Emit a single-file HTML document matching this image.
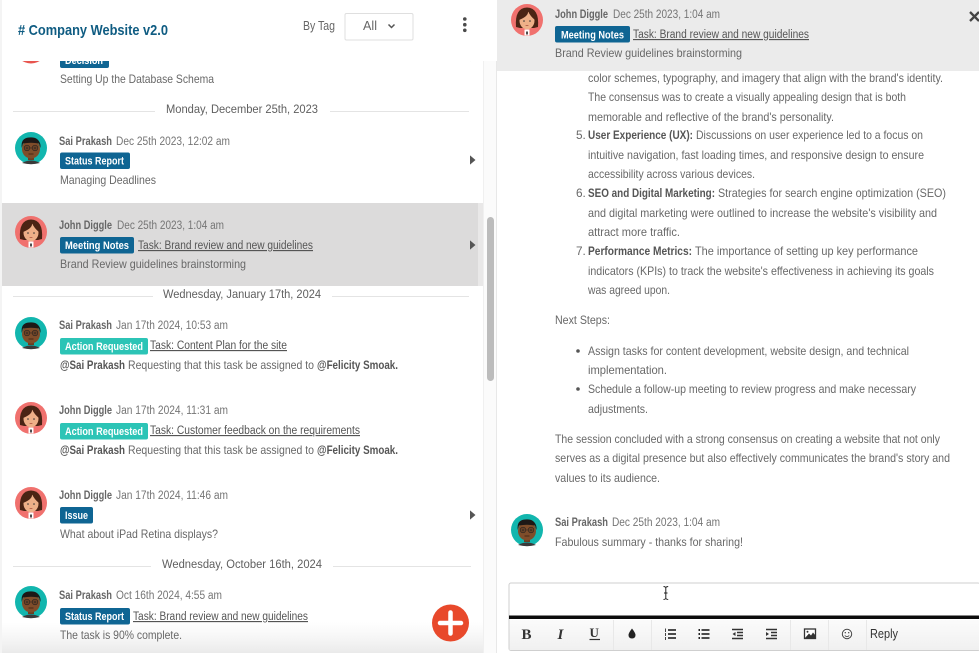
<!DOCTYPE html>
<html lang="en"><head><meta charset="utf-8"><title>Company Website v2.0</title>
<style>
html,body{margin:0;padding:0;background:#fff;width:979px;height:653px;overflow:hidden}
svg{display:block;filter:blur(.35px)}
text{font-family:"Liberation Sans",sans-serif;font-size:11.8px;fill:#686868}
.n{font-weight:bold;fill:#666;font-size:11.5px}
.d{fill:#757575;font-size:11.5px}
.t{font-weight:bold;fill:#fff;font-size:11px}
.l{fill:#555;font-size:11.5px;text-decoration:underline}
.b{font-weight:bold;fill:#555;font-size:11.5px}
.h{fill:#5f5f5f;font-size:12.200px}
</style></head><body>
<svg width="979" height="653" viewBox="0 0 979 653" xmlns="http://www.w3.org/2000/svg">
<defs>
<linearGradient id="fade" x1="0" y1="0" x2="0" y2="1"><stop offset="0" stop-color="#f0f0f0" stop-opacity="0"/><stop offset="1" stop-color="#eaeaea"/></linearGradient>
<linearGradient id="tb" x1="0" y1="0" x2="0" y2="1"><stop offset="0" stop-color="#fbfbfb"/><stop offset="1" stop-color="#f0f0f0"/></linearGradient>
<symbol id="man" viewBox="-16 -16 32 32" overflow="visible">
<circle r="16" fill="#12b6ae"/>
<path d="M-9 15Q0 10 9 15Q4 16.200 0 16.200Q-4 16.200 -9 15Z" fill="#3a3a3a"/>
<rect x="-3" y="6" width="6" height="6" fill="#6b3f22"/>
<ellipse cx="0" cy="1" rx="9" ry="9.500" fill="#7f4d2a"/>
<path d="M-9.300 0Q-10.500 -10 -2 -10.500Q7 -11.500 9.300 -4Q9.800 -2 9.300 0L8 -4.500Q0 -6 -8 -4.500Z" fill="#1d1816"/>
<circle cx="-4" cy="0" r="2.800" fill="#6a4226" stroke="#2a2320" stroke-width=".6"/>
<circle cx="4" cy="0" r="2.800" fill="#6a4226" stroke="#2a2320" stroke-width=".6"/>
<circle cx="-4" cy="0" r=".8" fill="#222"/><circle cx="4" cy="0" r=".8" fill="#222"/>
<path d="M-1.200 0H1.200" stroke="#2a2320" stroke-width=".6"/>
<path d="M-2.500 6H2.500" stroke="#3a2010" stroke-width=".8"/>
</symbol>
<symbol id="woman" viewBox="-16 -16 32 32" overflow="visible">
<circle r="16" fill="#f0716e"/>
<path d="M-11 7Q-12.500 -12 0 -12.500Q12.500 -12 11 7L7 8H-7Z" fill="#4a2414"/>
<ellipse cx="0" cy="0.500" rx="7.500" ry="8.800" fill="#eeb088"/>
<path d="M-8 0Q-7 -8 1 -9Q2 -4 -8 0ZM8 0Q7 -7 1 -9Q3 -4 8 0Z" fill="#4a2414"/>
<circle cx="-3" cy="1" r=".8" fill="#333"/><circle cx="3" cy="1" r=".8" fill="#333"/>
<path d="M-1.400 5.500H1.400" stroke="#a64a3a" stroke-width=".7"/>
<path d="M-2.500 9.500H2.500V15.500H-2.500Z" fill="#fff"/><rect x="-.8" y="11.500" width="1.600" height="3" fill="#222"/>
</symbol>
<symbol id="arr" viewBox="0 0 6 10"><path d="M0 0L6 5L0 10Z" fill="#555"/></symbol>
</defs>

<rect width="979" height="653" fill="#fff"/>
<rect x="0" y="0" width="2" height="653" fill="#f4f4f4"/>
<rect x="483" y="0" width="14" height="653" fill="#fbfbfb"/>
<rect x="483" y="61" width="1" height="592" fill="#f0f0f0"/>
<rect x="496" y="0" width="1" height="653" fill="#e8e8e8"/>
<rect x="487" y="217" width="7" height="164" rx="3.500" fill="#bcbcbc"/>

<!-- clipped top item -->
<circle cx="31" cy="47.500" r="16" fill="#e8554f"/>
<rect x="60" y="52" width="49" height="16" rx="2" fill="#0f6593"/>
<text class="t" x="65" y="64" textLength="38" lengthAdjust="spacingAndGlyphs">Decision</text>
<use href="#arr" x="470" y="52" width="5" height="10"/>
<text x="60" y="83" textLength="154" lengthAdjust="spacingAndGlyphs">Setting Up the Database Schema</text>

<!-- header -->
<rect x="0" y="0" width="497" height="61" fill="#fff"/>
<rect x="0" y="0" width="2" height="61" fill="#f4f4f4"/>
<text x="18" y="35" textLength="150" lengthAdjust="spacingAndGlyphs" style="font-size:14.800px;font-weight:bold;fill:#0f5c82"># Company Website v2.0</text>
<text x="303" y="30" textLength="32" lengthAdjust="spacingAndGlyphs" style="font-size:12.500px;fill:#666">By Tag</text>
<rect x="345" y="13.500" width="68" height="26.500" rx="1.500" fill="#fff" stroke="#dfdfdf"/>
<text x="363" y="30" textLength="14" lengthAdjust="spacingAndGlyphs" style="font-size:12.500px;fill:#666">All</text>
<path d="M388.500 24.500L391.500 27.500L394.500 24.500" fill="none" stroke="#555" stroke-width="1.500"/>
<circle cx="464.800" cy="19" r="1.800" fill="#4a4a4a"/><circle cx="464.800" cy="24.700" r="1.800" fill="#4a4a4a"/><circle cx="464.800" cy="30.300" r="1.800" fill="#4a4a4a"/>

<!-- date 1 -->
<path d="M13 111.500H155M330 111.500H469" stroke="#e4e4e4"/>
<text x="166" y="113" textLength="152" lengthAdjust="spacingAndGlyphs" class="h">Monday, December 25th, 2023</text>

<!-- item 1 -->
<use href="#man" x="15" y="132" width="32" height="32"/>
<text class="n" x="59" y="145" textLength="53" lengthAdjust="spacingAndGlyphs">Sai Prakash</text>
<text class="d" x="116" y="145" textLength="114" lengthAdjust="spacingAndGlyphs">Dec 25th 2023, 12:02 am</text>
<rect x="60" y="152.500" width="70" height="16.500" rx="2" fill="#0f6593"/>
<text class="t" x="65" y="164.500" textLength="59" lengthAdjust="spacingAndGlyphs">Status Report</text>
<text x="60" y="184" textLength="96" lengthAdjust="spacingAndGlyphs">Managing Deadlines</text>
<use href="#arr" x="470" y="155" width="5.500" height="10"/>

<!-- selected -->
<rect x="2" y="203" width="476" height="83" fill="#dcdbdb"/>
<rect x="478" y="203" width="5" height="83" fill="#e9e8e8"/>
<use href="#woman" x="15" y="216" width="32" height="32"/>
<text class="n" x="59" y="229" textLength="53" lengthAdjust="spacingAndGlyphs">John Diggle</text>
<text class="d" x="117" y="229" textLength="107" lengthAdjust="spacingAndGlyphs">Dec 25th 2023, 1:04 am</text>
<rect x="60" y="237" width="74" height="16.500" rx="2" fill="#0f6593"/>
<text class="t" x="65" y="249" textLength="64" lengthAdjust="spacingAndGlyphs">Meeting Notes</text>
<text class="l" x="138" y="249" textLength="175" lengthAdjust="spacingAndGlyphs">Task: Brand review and new guidelines</text>
<text x="60" y="268" textLength="186" lengthAdjust="spacingAndGlyphs">Brand Review guidelines brainstorming</text>
<use href="#arr" x="470" y="240" width="5.500" height="10"/>

<!-- date 2 -->
<path d="M13 296.500H153M332 296.500H469" stroke="#e4e4e4"/>
<text x="163" y="298" textLength="158" lengthAdjust="spacingAndGlyphs" class="h">Wednesday, January 17th, 2024</text>

<!-- item 3 -->
<use href="#man" x="15" y="317" width="32" height="32"/>
<text class="n" x="59" y="329" textLength="53" lengthAdjust="spacingAndGlyphs">Sai Prakash</text>
<text class="d" x="116" y="329" textLength="112" lengthAdjust="spacingAndGlyphs">Jan 17th 2024, 10:53 am</text>
<rect x="60" y="338" width="88" height="16.500" rx="2" fill="#2cc4b6"/>
<text class="t" x="65" y="350" textLength="78" lengthAdjust="spacingAndGlyphs">Action Requested</text>
<text class="l" x="150" y="349" textLength="137" lengthAdjust="spacingAndGlyphs">Task: Content Plan for the site</text>
<text class="b" x="60" y="369" textLength="65" lengthAdjust="spacingAndGlyphs">@Sai Prakash</text>
<text x="128" y="369" textLength="186" lengthAdjust="spacingAndGlyphs">Requesting that this task be assigned to</text>
<text class="b" x="317" y="369" textLength="81" lengthAdjust="spacingAndGlyphs">@Felicity Smoak.</text>

<!-- item 4 -->
<use href="#woman" x="15" y="402" width="32" height="32"/>
<text class="n" x="59" y="414" textLength="53" lengthAdjust="spacingAndGlyphs">John Diggle</text>
<text class="d" x="116" y="414" textLength="112" lengthAdjust="spacingAndGlyphs">Jan 17th 2024, 11:31 am</text>
<rect x="60" y="423" width="88" height="16.500" rx="2" fill="#2cc4b6"/>
<text class="t" x="65" y="435" textLength="78" lengthAdjust="spacingAndGlyphs">Action Requested</text>
<text class="l" x="150" y="434" textLength="210" lengthAdjust="spacingAndGlyphs">Task: Customer feedback on the requirements</text>
<text class="b" x="60" y="454" textLength="65" lengthAdjust="spacingAndGlyphs">@Sai Prakash</text>
<text x="128" y="454" textLength="186" lengthAdjust="spacingAndGlyphs">Requesting that this task be assigned to</text>
<text class="b" x="317" y="454" textLength="81" lengthAdjust="spacingAndGlyphs">@Felicity Smoak.</text>

<!-- item 5 -->
<use href="#woman" x="15" y="487" width="32" height="32"/>
<text class="n" x="59" y="499" textLength="53" lengthAdjust="spacingAndGlyphs">John Diggle</text>
<text class="d" x="116" y="499" textLength="112" lengthAdjust="spacingAndGlyphs">Jan 17th 2024, 11:46 am</text>
<rect x="60" y="507" width="33" height="16.500" rx="2" fill="#0f6593"/>
<text class="t" x="65" y="519" textLength="23" lengthAdjust="spacingAndGlyphs">Issue</text>
<text x="60" y="538" textLength="158" lengthAdjust="spacingAndGlyphs">What about iPad Retina displays?</text>
<use href="#arr" x="470" y="510" width="5.500" height="10"/>

<!-- date 3 -->
<path d="M13 566.500H151M333 566.500H471" stroke="#e4e4e4"/>
<text x="162" y="568" textLength="160" lengthAdjust="spacingAndGlyphs" class="h">Wednesday, October 16th, 2024</text>

<!-- bottom fade under last item -->
<rect x="2" y="622" width="481" height="31" fill="url(#fade)"/>

<!-- item 6 -->
<use href="#man" x="15" y="586" width="32" height="32"/>
<text class="n" x="59" y="599" textLength="53" lengthAdjust="spacingAndGlyphs">Sai Prakash</text>
<text class="d" x="116" y="599" textLength="106" lengthAdjust="spacingAndGlyphs">Oct 16th 2024, 4:55 am</text>
<rect x="60" y="608" width="70" height="16.500" rx="2" fill="#0f6593"/>
<text class="t" x="65" y="620" textLength="59" lengthAdjust="spacingAndGlyphs">Status Report</text>
<text class="l" x="133" y="620" textLength="175" lengthAdjust="spacingAndGlyphs">Task: Brand review and new guidelines</text>
<text x="60" y="639" textLength="122" lengthAdjust="spacingAndGlyphs">The task is 90% complete.</text>

<!-- FAB -->
<circle cx="450.500" cy="623" r="18.500" fill="#e8492b"/>
<path d="M450.500 612.500V633.500M440 623H461" stroke="#fff" stroke-width="4.500" stroke-linecap="round"/>

<!-- right panel -->
<rect x="497" y="0" width="482" height="71" fill="#ebebeb"/>
<use href="#woman" x="511" y="4" width="32" height="32"/>
<text class="n" x="555" y="18" textLength="53" lengthAdjust="spacingAndGlyphs">John Diggle</text>
<text class="d" x="613" y="18" textLength="107" lengthAdjust="spacingAndGlyphs">Dec 25th 2023, 1:04 am</text>
<rect x="555" y="26" width="75" height="16.500" rx="2" fill="#0f6593"/>
<text class="t" x="561" y="38.500" textLength="63" lengthAdjust="spacingAndGlyphs">Meeting Notes</text>
<text class="l" x="633" y="38" textLength="176" lengthAdjust="spacingAndGlyphs">Task: Brand review and new guidelines</text>
<text x="555" y="57" textLength="187" lengthAdjust="spacingAndGlyphs">Brand Review guidelines brainstorming</text>
<path d="M970 12L979 21M979 12L970 21" stroke="#444" stroke-width="2.300"/>

<text x="588" y="82" textLength="355" lengthAdjust="spacingAndGlyphs">color schemes, typography, and imagery that align with the brand's identity.</text>
<text x="588" y="101" textLength="318" lengthAdjust="spacingAndGlyphs">The consensus was to create a visually appealing design that is both</text>
<text x="588" y="121" textLength="246" lengthAdjust="spacingAndGlyphs">memorable and reflective of the brand's personality.</text>

<text x="576" y="139">5.</text>
<text class="b" x="588" y="139" textLength="105" lengthAdjust="spacingAndGlyphs">User Experience (UX):</text>
<text x="696" y="139" textLength="227" lengthAdjust="spacingAndGlyphs">Discussions on user experience led to a focus on</text>
<text x="588" y="159" textLength="336" lengthAdjust="spacingAndGlyphs">intuitive navigation, fast loading times, and responsive design to ensure</text>
<text x="588" y="178" textLength="167" lengthAdjust="spacingAndGlyphs">accessibility across various devices.</text>

<text x="576" y="197">6.</text>
<text class="b" x="588" y="197" textLength="127" lengthAdjust="spacingAndGlyphs">SEO and Digital Marketing:</text>
<text x="718" y="197" textLength="228" lengthAdjust="spacingAndGlyphs">Strategies for search engine optimization (SEO)</text>
<text x="588" y="217" textLength="349" lengthAdjust="spacingAndGlyphs">and digital marketing were outlined to increase the website's visibility and</text>
<text x="588" y="236" textLength="92" lengthAdjust="spacingAndGlyphs">attract more traffic.</text>

<text x="576" y="255">7.</text>
<text class="b" x="588" y="255" textLength="104" lengthAdjust="spacingAndGlyphs">Performance Metrics:</text>
<text x="695" y="255" textLength="223" lengthAdjust="spacingAndGlyphs">The importance of setting up key performance</text>
<text x="588" y="275" textLength="346" lengthAdjust="spacingAndGlyphs">indicators (KPIs) to track the website's effectiveness in achieving its goals</text>
<text x="588" y="294" textLength="82" lengthAdjust="spacingAndGlyphs">was agreed upon.</text>

<text x="555" y="324" textLength="55" lengthAdjust="spacingAndGlyphs">Next Steps:</text>

<circle cx="578" cy="351" r="1.800" fill="#555"/>
<text x="588" y="355" textLength="321" lengthAdjust="spacingAndGlyphs">Assign tasks for content development, website design, and technical</text>
<text x="588" y="374" textLength="79" lengthAdjust="spacingAndGlyphs">implementation.</text>
<circle cx="578" cy="389" r="1.800" fill="#555"/>
<text x="588" y="393" textLength="328" lengthAdjust="spacingAndGlyphs">Schedule a follow-up meeting to review progress and make necessary</text>
<text x="588" y="413" textLength="60" lengthAdjust="spacingAndGlyphs">adjustments.</text>

<text x="555" y="443" textLength="385" lengthAdjust="spacingAndGlyphs">The session concluded with a strong consensus on creating a website that not only</text>
<text x="555" y="462" textLength="395" lengthAdjust="spacingAndGlyphs">serves as a digital presence but also effectively communicates the brand's story and</text>
<text x="555" y="482" textLength="105" lengthAdjust="spacingAndGlyphs">values to its audience.</text>

<use href="#man" x="511" y="514" width="32" height="32"/>
<text class="n" x="555" y="526" textLength="53" lengthAdjust="spacingAndGlyphs">Sai Prakash</text>
<text class="d" x="612" y="526" textLength="108" lengthAdjust="spacingAndGlyphs">Dec 25th 2023, 1:04 am</text>
<text x="555" y="546" textLength="188" lengthAdjust="spacingAndGlyphs">Fabulous summary - thanks for sharing!</text>

<!-- editor -->
<rect x="509" y="583" width="471" height="67.500" rx="2" fill="#fff" stroke="#cfcfcf"/>
<rect x="509" y="615.500" width="470" height="3.500" fill="#0c0c0c"/>
<rect x="509.500" y="620" width="470" height="30" fill="url(#tb)"/>
<path d="M613.500 620V650M651.500 620V650M790.500 620V650M828.500 620V650M866.500 620V650" stroke="#e8e8e8"/>
<path d="M663.500 586.500Q665 586.500 665.800 587.500Q666.600 586.500 668.200 586.500M665.800 587.500V598.500M663.500 599.500Q665 599.500 665.800 598.500Q666.600 599.500 668.200 599.500M664 593H667.500" fill="none" stroke="#222" stroke-width="1"/>

<text x="521.500" y="639" style="font-family:'Liberation Serif',serif;font-size:15px;font-weight:bold;fill:#333">B</text>
<text x="557.500" y="639" style="font-family:'Liberation Serif',serif;font-size:15px;font-weight:bold;font-style:italic;fill:#333">I</text>
<text x="589.500" y="637" style="font-family:'Liberation Serif',serif;font-size:13px;font-weight:bold;fill:#333">U</text>
<path d="M589.500 639.500H600" stroke="#333" stroke-width="1.200"/>
<path d="M632 628.500Q628.500 633 628.500 635Q628.500 638.500 632 638.500Q635.500 638.500 635.500 635Q635.500 633 632 628.500Z" fill="#222"/>
<path d="M668 630H676M668 634H676M668 638H676" stroke="#333" stroke-width="1.700"/>
<path d="M665.500 628.500V632M665.500 633V636M665.500 637V640" stroke="#444" stroke-width="1"/>
<path d="M698.500 630H700M698.500 634H700M698.500 638H700" stroke="#222" stroke-width="2"/>
<path d="M701.500 630H709.500M701.500 634H709.500M701.500 638H709.500" stroke="#333" stroke-width="1.700"/>
<path d="M732 629.500H743M737 632.500H743M737 635.500H743M732 638.500H743" stroke="#333" stroke-width="1.600"/>
<path d="M735.500 632L732.500 634L735.500 636Z" fill="#333"/>
<path d="M766 629.500H777M771 632.500H777M771 635.500H777M766 638.500H777" stroke="#333" stroke-width="1.600"/>
<path d="M766 632L769 634L766 636Z" fill="#333"/>
<rect x="804.500" y="629" width="11" height="9.500" fill="#fff" stroke="#333" stroke-width="1.300"/>
<path d="M805 638L809 633.500L811 635.500L813 632.500L815.500 635.500V638Z" fill="#333"/><circle cx="807.500" cy="631.800" r="1" fill="#333"/>
<circle cx="847" cy="634" r="4.700" fill="none" stroke="#444" stroke-width="1"/>
<circle cx="845.300" cy="632.700" r=".7" fill="#444"/><circle cx="848.700" cy="632.700" r=".7" fill="#444"/>
<path d="M844.800 635.500Q847 637.800 849.200 635.500" fill="none" stroke="#444" stroke-width=".9"/>
<text x="870" y="638" textLength="28" lengthAdjust="spacingAndGlyphs" style="font-size:12.500px;fill:#333">Reply</text>
</svg>
</body></html>
